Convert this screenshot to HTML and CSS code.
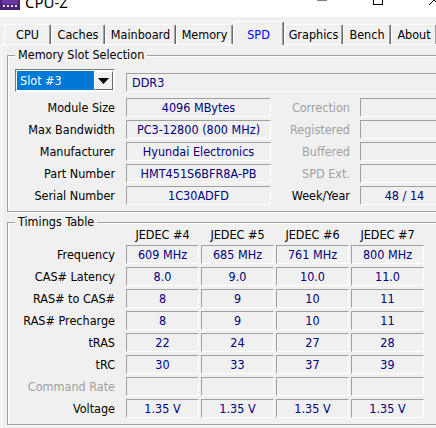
FILE: index.html
```html
<!DOCTYPE html>
<html>
<head>
<meta charset="utf-8">
<link rel="stylesheet" href="styles.css">
</head>
<body>
<div class="window">
  <div class="titlebar">
    <div class="title-row">
      <svg class="app-icon" width="20" height="20" viewBox="0 0 20 20">
        <rect x="0" y="0" width="20" height="20" fill="#4b2378"/>
        <rect x="2" y="2" width="16" height="12" fill="#6a3aa2"/>
        <rect x="3" y="15" width="2" height="2" fill="#e8e0f0"/>
        <rect x="7" y="15" width="2" height="2" fill="#e8e0f0"/>
        <rect x="11" y="15" width="2" height="2" fill="#e8e0f0"/>
        <rect x="15" y="15" width="2" height="2" fill="#e8e0f0"/>
        <rect x="4" y="7" width="3" height="3" fill="#c9b8e0"/>
        <rect x="9" y="7" width="3" height="3" fill="#c9b8e0"/>
      </svg>
      <span class="title">CPU-Z</span>
      <span class="spacer"></span>
      <span class="wbtn"><svg width="10" height="10" viewBox="0 0 10 10"><rect x="0" y="4.5" width="10" height="1" fill="#000"/></svg></span>
      <span class="wbtn"><svg width="10" height="10" viewBox="0 0 10 10"><rect x="0.5" y="0.5" width="9" height="9" fill="none" stroke="#000" stroke-width="1"/></svg></span>
      <span class="wbtn"><svg width="10" height="10" viewBox="0 0 10 10"><path d="M0 0 L10 10 M10 0 L0 10" stroke="#000" stroke-width="1"/></svg></span>
    </div>
  </div>

  <div class="tabs">
    <div class="tab w-cpu">CPU</div>
    <div class="tab w-caches">Caches</div>
    <div class="tab w-main">Mainboard</div>
    <div class="tab w-mem">Memory</div>
    <div class="tab tab-active w-spd">SPD</div>
    <div class="tab w-gfx">Graphics</div>
    <div class="tab w-bench">Bench</div>
    <div class="tab w-about">About</div>
  </div>

  <div class="panel">
    <fieldset class="group">
      <legend>Memory Slot Selection</legend>
      <div class="slot-row">
        <div class="combo">
          <span class="combo-value">Slot #3</span>
          <span class="combo-btn"><svg width="11" height="6" viewBox="0 0 11 6"><path d="M0 0 H11 L5.5 6 Z" fill="#000"/></svg></span>
        </div>
        <div class="box box-type">DDR3</div>
      </div>
      <div class="spd-grid">
        <div class="label">Module Size</div><div class="box">4096 MBytes</div><div class="label label-r dim">Correction</div><div class="box"></div>
        <div class="label">Max Bandwidth</div><div class="box">PC3-12800 (800 MHz)</div><div class="label label-r dim">Registered</div><div class="box"></div>
        <div class="label">Manufacturer</div><div class="box">Hyundai Electronics</div><div class="label label-r dim">Buffered</div><div class="box"></div>
        <div class="label">Part Number</div><div class="box">HMT451S6BFR8A-PB</div><div class="label label-r dim">SPD Ext.</div><div class="box"></div>
        <div class="label">Serial Number</div><div class="box">1C30ADFD</div><div class="label label-r">Week/Year</div><div class="box">48 / 14</div>
      </div>
    </fieldset>

    <fieldset class="group">
      <legend>Timings Table</legend>
      <div class="tgrid">
        <div></div><div class="colhead">JEDEC #4</div><div class="colhead">JEDEC #5</div><div class="colhead">JEDEC #6</div><div class="colhead">JEDEC #7</div>
        <div class="label">Frequency</div><div class="box">609 MHz</div><div class="box">685 MHz</div><div class="box">761 MHz</div><div class="box">800 MHz</div>
        <div class="label">CAS# Latency</div><div class="box">8.0</div><div class="box">9.0</div><div class="box">10.0</div><div class="box">11.0</div>
        <div class="label">RAS# to CAS#</div><div class="box">8</div><div class="box">9</div><div class="box">10</div><div class="box">11</div>
        <div class="label">RAS# Precharge</div><div class="box">8</div><div class="box">9</div><div class="box">10</div><div class="box">11</div>
        <div class="label">tRAS</div><div class="box">22</div><div class="box">24</div><div class="box">27</div><div class="box">28</div>
        <div class="label">tRC</div><div class="box">30</div><div class="box">33</div><div class="box">37</div><div class="box">39</div>
        <div class="label dim">Command Rate</div><div class="box"></div><div class="box"></div><div class="box"></div><div class="box"></div>
        <div class="label">Voltage</div><div class="box">1.35 V</div><div class="box">1.35 V</div><div class="box">1.35 V</div><div class="box">1.35 V</div>
      </div>
    </fieldset>
  </div>
</div>
</body>
</html>
```

FILE: styles.css
```css
html, body {
  margin: 0;
  padding: 0;
}
body {
  width: 436px;
  height: 428px;
  overflow: hidden;
  background: #f0f0f0;
  font-family: "DejaVu Sans Condensed", "DejaVu Sans", sans-serif;
  font-stretch: condensed;
  font-size: 12.5px;
  color: #000;
}
.window {
  width: 462px;
  height: 428px;
  overflow: hidden;
  background: #f0f0f0;
}

/* title bar */
.titlebar {
  height: 17px;
  background: #fff;
  overflow: hidden;
}
.title-row {
  display: flex;
  align-items: center;
  height: 32px;
  margin-top: -16px;
}
.app-icon {
  display: block;
  flex: none;
}
.title {
  margin-left: 5px;
  padding-top: 3px;
  font-family: "Noto Sans", "Open Sans", sans-serif;
  font-stretch: normal;
  font-size: 15px;
  line-height: 20px;
  color: #000;
}
.spacer {
  flex: 1;
}
.wbtn {
  width: 56px;
  height: 32px;
  display: flex;
  align-items: center;
  justify-content: center;
  flex: none;
}
.wbtn svg {
  display: block;
}

/* tabs */
.tabs {
  display: flex;
  align-items: flex-end;
  height: 27px;
  padding-left: 4px;
}
.tab {
  box-sizing: border-box;
  height: 20px;
  border-top: 1px solid #fff;
  border-left: 1px solid #fff;
  border-right: 1px solid #696969;
  box-shadow: inset -1px 0 0 #a0a0a0;
  border-radius: 2px 2px 0 0;
  text-align: center;
  line-height: 19px;
  white-space: nowrap;
  flex: none;
}
.tab-active {
  position: relative;
  z-index: 1;
  height: 24px;
  margin-bottom: -1px;
  padding-top: 3px;
  line-height: 19px;
  background: #f0f0f0;
  color: #0000ff;
}
.w-cpu { width: 47px; }
.w-caches { width: 54px; }
.w-main { width: 71px; }
.w-mem { width: 57px; }
.w-spd { width: 51px; }
.w-gfx { width: 59px; }
.w-bench { width: 48px; }
.w-about { width: 46px; }

/* panel */
.panel {
  margin: 0 1px;
  border-top: 1px solid #fff;
  border-left: 1px solid #fff;
  border-right: 1px solid #696969;
  padding: 0 5px;
  height: 400px;
}

.group {
  margin: 2px 0 0;
  padding: 0 4px 6px 7px;
  border: 1px solid #a0a0a0;
  box-shadow: inset 1px 1px 0 #fff, 1px 1px 0 #fff;
  min-width: 0;
}
.group legend {
  position: relative;
  margin: 0;
  padding: 0 3px;
  line-height: 16px;
  background: #f0f0f0;
  color: #000;
}

.slot-row {
  display: flex;
  align-items: flex-end;
  margin-top: 6px;
  margin-bottom: 6px;
}
.combo {
  box-sizing: border-box;
  width: 100px;
  height: 23px;
  display: flex;
  border-top: 1px solid #7a7a7a;
  border-left: 1px solid #7a7a7a;
  border-right: 1px solid #fff;
  border-bottom: 1px solid #fff;
  padding: 1px;
  background: #fff;
  flex: none;
}
.combo-value {
  flex: 1;
  background: #0078d7;
  color: #fff;
  padding-left: 3px;
  line-height: 19px;
  white-space: nowrap;
}
.combo-btn {
  box-sizing: border-box;
  width: 19px;
  display: flex;
  align-items: center;
  justify-content: center;
  background: #f0f0f0;
  border-top: 1px solid #fff;
  border-left: 1px solid #fff;
  border-right: 1px solid #696969;
  border-bottom: 1px solid #696969;
}
.combo-btn svg {
  display: block;
}

.box {
  box-sizing: border-box;
  height: 19px;
  border-top: 1px solid #a0a0a0;
  border-left: 1px solid #a0a0a0;
  border-right: 1px solid #fff;
  border-bottom: 1px solid #fff;
  line-height: 17px;
  text-align: center;
  color: #000080;
  white-space: nowrap;
  overflow: hidden;
}
.box-type {
  flex: 1;
  margin-left: 11px;
  text-align: left;
  padding-left: 5px;
}

.label {
  text-align: right;
  line-height: 19px;
  white-space: nowrap;
  color: #000;
}
.dim {
  color: #a0a0a0;
}

.spd-grid {
  display: grid;
  grid-template-columns: 111px 145px 89px 89px;
  grid-auto-rows: 19px;
  row-gap: 3px;
}
.spd-grid .label {
  padding-right: 11px;
}
.spd-grid .label-r {
  padding-right: 10px;
}

.tgrid {
  display: grid;
  grid-template-columns: 109px repeat(4, 73px);
  grid-template-rows: 12px;
  grid-auto-rows: 19px;
  column-gap: 2px;
  row-gap: 3px;
}
.tgrid .label {
  padding-right: 9px;
}
.colhead {
  text-align: center;
  line-height: 10px;
  white-space: nowrap;
  align-self: start;
}
```
